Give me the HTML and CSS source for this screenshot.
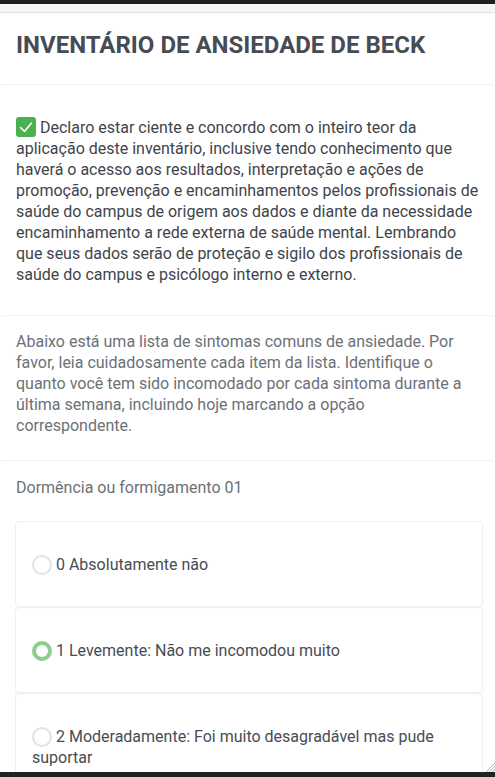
FILE: index.html
```html
<!DOCTYPE html>
<html lang="pt-BR">
<head>
<meta charset="utf-8">
<title>Inventário de Ansiedade de Beck</title>
<link rel="stylesheet" href="styles.css">
</head>
<body>
<div class="topbar"></div>
<div class="strip"></div>
<main class="page">
  <section class="card title-card">
    <h1 class="title">INVENTÁRIO DE ANSIEDADE DE BECK</h1>
  </section>
  <section class="card consent-card">
    <p class="consent"><span class="check"><svg width="20" height="20" viewBox="0 0 20 20"><rect width="20" height="20" rx="3" fill="#4caf50"/><path d="M4.5 10.5 L8.5 14.5 L15.5 6" fill="none" stroke="#fff" stroke-width="1.6" stroke-linecap="round" stroke-linejoin="round"/></svg></span> Declaro estar ciente e concordo com o inteiro teor da aplicação deste inventário, inclusive tendo conhecimento que haverá o acesso aos resultados, interpretação e ações de promoção, prevenção e encaminhamentos pelos profissionais de saúde do campus de origem aos dados e diante da necessidade encaminhamento a rede externa de saúde mental. Lembrando que seus dados serão de proteção e sigilo dos profissionais de saúde do campus e psicólogo interno e externo.</p>
  </section>
  <section class="card intro-card">
    <p class="intro">Abaixo está uma lista de sintomas comuns de ansiedade. Por favor, leia cuidadosamente cada item da lista. Identifique o quanto você tem sido incomodado por cada sintoma durante a última semana, incluindo hoje marcando a opção correspondente.</p>
  </section>
  <section class="card question-card">
    <p class="question">Dormência ou formigamento 01</p>
    <div class="options">
      <label class="option"><span class="radio"></span> 0 Absolutamente não</label>
      <label class="option"><span class="radio radio-on"></span> 1 Levemente: Não me incomodou muito</label>
      <label class="option"><span class="radio"></span> 2 Moderadamente: Foi muito desagradável mas pude suportar</label>
    </div>
  </section>
</main>
<div class="bottombar"></div>
<svg class="grip" width="10" height="10" viewBox="0 0 10 10"><path d="M10 1 L1 10 M10 4 L4 10 M10 7 L7 10" stroke="#b5b5b5" stroke-width="1"/></svg>
</body>
</html>
```
FILE: styles.css
```css
html, body {
  margin: 0;
  padding: 0;
  background: #ffffff;
}
body {
  font-family: Roboto, "Liberation Sans", Arial, sans-serif;
  font-size: 16px;
  line-height: 21px;
  color: #495057;
}
.topbar {
  height: 4px;
  background: #1e1e1e;
}
.strip {
  height: 8px;
  background: #f4f6f8;
  border-bottom: 1px solid #dde2e7;
}
.page {
  display: flex;
  flex-direction: column;
}
.card {
  background: #fff;
  border-top: 1px solid #efefef;
  border-radius: 4px 4px 0 0;
}
.title-card {
  border-top: none;
  padding: 18px 16px 24px;
}
.title {
  margin: 0;
  font-size: 24px;
  line-height: 29px;
  font-weight: 700;
  color: #464b54;
}
.consent-card {
  padding: 32px 16px 30px;
}
.consent {
  margin: 0;
  color: #3f444b;
}
.check {
  display: inline-block;
  width: 20px;
  height: 20px;
  vertical-align: -4px;
}
.check svg {
  display: block;
}
.intro-card {
  padding: 15px 16px 24px;
}
.intro {
  margin: 0;
  color: #6c7177;
}
.question-card {
  padding: 16px 0 0;
}
.question {
  margin: 0 16px 23px;
  color: #6c7177;
}
.options {
  display: flex;
  flex-direction: column;
  margin: 0 12px 0 15px;
}
.option {
  display: block;
  padding: 32px 16px 31px;
  border: 1px solid #f0f0f0;
  border-radius: 4px;
  box-shadow: 0 1px 2px rgba(0, 0, 0, 0.04);
  color: #474c53;
}
.radio {
  display: inline-block;
  box-sizing: border-box;
  width: 20px;
  height: 20px;
  border: 2px solid #dee2e6;
  border-radius: 50%;
  vertical-align: -5px;
}
.radio-on {
  border: 4px solid #8dcd8d;
}
.bottombar {
  position: fixed;
  left: 0;
  right: 0;
  bottom: 0;
  height: 5px;
  background: #222222;
}
.grip {
  position: fixed;
  right: 0;
  bottom: 5px;
}
```
